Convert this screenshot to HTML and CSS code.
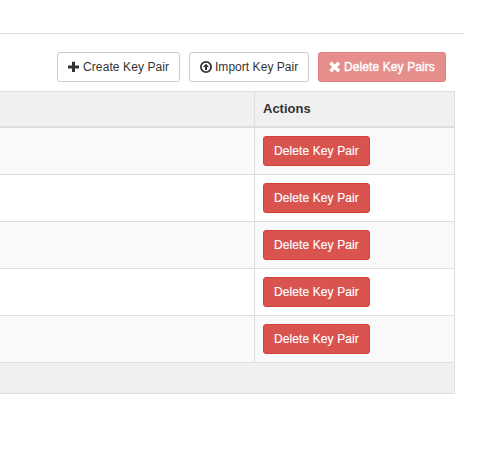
FILE: index.html
```html
<!DOCTYPE html>
<html lang="en">
<head>
<meta charset="utf-8">
<title>Key Pairs</title>
<link rel="stylesheet" href="styles.css">
</head>
<body>
<div class="header-rule"></div>
<div class="toolbar">
  <button class="btn create"><svg class="icon" viewBox="0 0 12 12"><path d="M4 .8h3V4.500h4v3H7V11H4V7.500H0v-3h4z"/></svg><span>Create Key Pair</span></button>
  <button class="btn import"><svg class="icon" viewBox="0 0 12 12"><circle cx="6" cy="6" r="5.100" class="ring"/><path d="M6 2.700L9 6H7v3H5V6H3z"/></svg><span>Import Key Pair</span></button>
  <button class="btn danger delete-all"><svg class="icon" viewBox="0 0 12 12"><path d="M2.700 .4L5.700 3.400 8.700 .4l2.500 2.500L8.200 5.900l3 3-2.500 2.500L5.700 8.400l-3 3L.2 8.900l3-3-3-3z"/></svg><span>Delete Key Pairs</span></button>
</div>
<table class="keypairs">
  <thead><tr><th class="name"></th><th>Actions</th></tr></thead>
  <tbody>
    <tr><td class="name"></td><td><button class="btn danger">Delete Key Pair</button></td></tr>
    <tr><td class="name"></td><td><button class="btn danger">Delete Key Pair</button></td></tr>
    <tr><td class="name"></td><td><button class="btn danger">Delete Key Pair</button></td></tr>
    <tr><td class="name"></td><td><button class="btn danger">Delete Key Pair</button></td></tr>
    <tr><td class="name"></td><td><button class="btn danger">Delete Key Pair</button></td></tr>
  </tbody>
  <tfoot><tr><td colspan="2"></td></tr></tfoot>
</table>
</body>
</html>
```
FILE: styles.css
```css
* { box-sizing: border-box; }
body {
  margin: 0;
  background: #fff;
  color: #333;
  font-family: "Liberation Sans", Arial, sans-serif;
  font-size: 13px;
  overflow: hidden;
}
.header-rule {
  width: 464px;
  margin-top: 33px;
  border-top: 1px solid #ddd;
}
.toolbar {
  display: flex;
  justify-content: flex-end;
  gap: 9px;
  width: 446px;
  padding-top: 18px;
}
.btn {
  display: flex;
  align-items: center;
  height: 30px;
  margin: 0;
  padding: 0 10px;
  border: 1px solid #ccc;
  border-radius: 3px;
  background: #fff;
  color: #333;
  font: 12px/18px "Liberation Sans", Arial, sans-serif;
  letter-spacing: .1px;
  white-space: nowrap;
}
.create { width: 123px; }
.import {
  width: 120px;
  letter-spacing: .04px;
}
.icon {
  flex: none;
  width: 12px;
  height: 12px;
  margin-right: 3px;
  fill: currentColor;
}
.ring {
  fill: none;
  stroke: currentColor;
  stroke-width: 1.8;
}
.danger {
  width: 107px;
  background: #d9534f;
  border-color: #d43f3a;
  color: #fff;
  -webkit-text-stroke: .15px #fff;
}
.delete-all {
  width: 128px;
  opacity: .65;
}
.delete-all span { -webkit-text-stroke: .4px #fff; }
.keypairs {
  width: 455px;
  margin-top: 9px;
  border-collapse: separate;
  border-spacing: 0;
  table-layout: fixed;
  border-top: 1px solid #ddd;
  border-right: 1px solid #ddd;
}
th, td {
  padding: 0 8px;
  text-align: left;
  vertical-align: middle;
  border-bottom: 1px solid #ddd;
}
.name {
  width: 255px;
  border-right: 1px solid #ddd;
}
th {
  height: 36px;
  padding-bottom: 2px;
  background: #f0f0f0;
  border-bottom-width: 2px;
}
tbody td { height: 47px; }
tbody tr:nth-child(odd) { background: #f9f9f9; }
tfoot td {
  height: 31px;
  background: #f0f0f0;
  border-bottom-right-radius: 2px;
}
```
